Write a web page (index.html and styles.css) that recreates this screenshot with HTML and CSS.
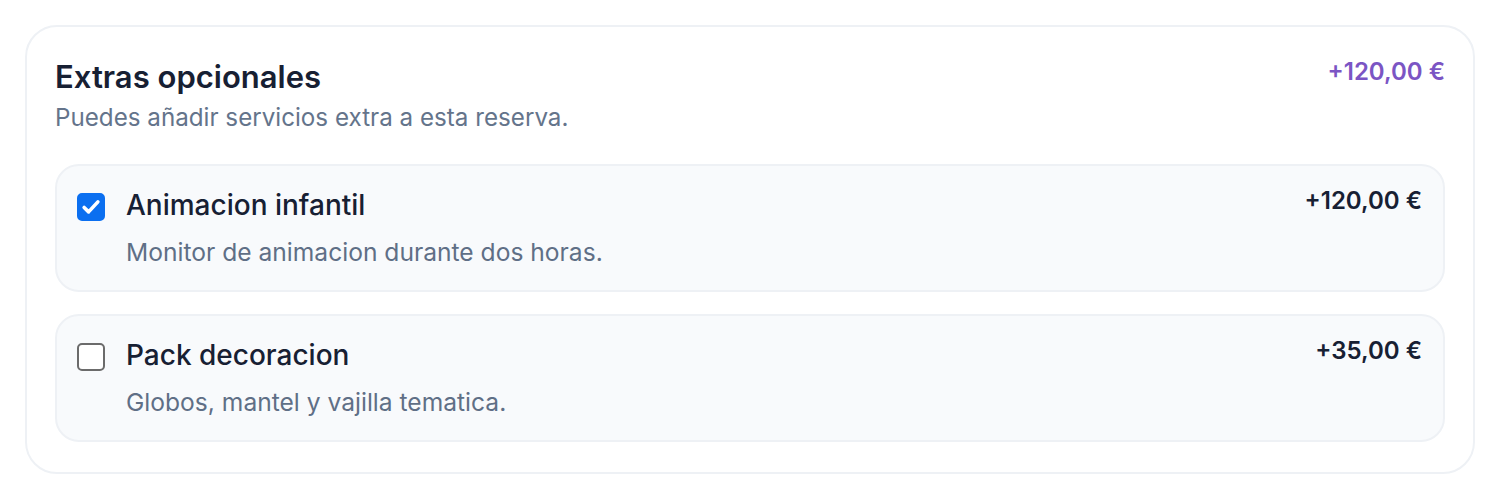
FILE: index.html
```html
<html>
<head>
    <link rel="stylesheet" href="styles.css">
</head>
<body>

<div class="panel">

    <div class="panel-head">
        <div>
            <h2>Extras opcionales</h2>
            <p class="hint">Puedes añadir servicios extra a esta reserva.</p>
        </div>
        <span class="total">+120,00 €</span>
    </div>

    <div class="extras">
        <label class="extra">
            <input type="checkbox" checked>
            <div class="extra-body">
                <div class="extra-top">
                    <span class="extra-name">Animacion infantil</span>
                    <span class="extra-price">+120,00 €</span>
                </div>
                <p class="extra-desc">Monitor de animacion durante dos horas.</p>
            </div>
        </label>

        <label class="extra">
            <input type="checkbox">
            <div class="extra-body">
                <div class="extra-top">
                    <span class="extra-name">Pack decoracion</span>
                    <span class="extra-price">+35,00 €</span>
                </div>
                <p class="extra-desc">Globos, mantel y vajilla tematica.</p>
            </div>
        </label>
    </div>

</div>

</body>
</html>
```

FILE: styles.css
```css
body{
    margin: 0;
    padding: 25px;
    background-color: #fff;
    font-family: Inter, "Noto Sans", sans-serif;
    color: #172033;
}
div.panel{
    border: 2px solid #eef1f5;
    border-radius: 32px;
    padding: 31px 28px 30px 28px;
}
.panel-head{
    display: flex;
    justify-content: space-between;
    align-items: flex-start;
}
h2{
    margin: 0;
    font-size: 31px;
    font-weight: 600;
    line-height: 38px;
    color: #172033;
}
p.hint{
    margin: 6px 0 0 0;
    font-size: 24.2px;
    line-height: 32px;
    color: #64748b;
}
.total{
    font-size: 24px;
    font-weight: 600;
    line-height: 28px;
    color: #7b55c4;
}
.extras{
    margin-top: 30px;
    display: flex;
    flex-direction: column;
    gap: 22px;
}
label.extra{
    display: flex;
    gap: 21px;
    padding: 21px 21px 22px 20px;
    background-color: #f8fafc;
    border: 2px solid #eef1f5;
    border-radius: 24px;
}
label.extra input{
    appearance: none;
    margin: 6px 0 0 0;
    width: 28px;
    height: 28px;
    flex-shrink: 0;
    border: 2px solid #6b6b6b;
    border-radius: 5px;
    background-color: #fff;
}
label.extra input:checked{
    border-color: #0b6ff0;
    background-color: #0b6ff0;
    background-image: url("data:image/svg+xml,%3Csvg xmlns='http://www.w3.org/2000/svg' viewBox='0 0 28 28'%3E%3Cpath d='M6 14.5l5.2 5.2L22 8' fill='none' stroke='%23fff' stroke-width='4.2' stroke-linecap='round' stroke-linejoin='round'/%3E%3C/svg%3E");
    background-size: 100% 100%;
}
.extra-body{
    flex: 1;
}
.extra-top{
    display: flex;
    justify-content: space-between;
    align-items: flex-start;
}
.extra-name{
    font-size: 28px;
    font-weight: 500;
    line-height: 36px;
}
.extra-price{
    font-size: 24px;
    font-weight: 600;
    line-height: 28px;
}
p.extra-desc{
    margin: 13px 0 0 0;
    font-size: 24.6px;
    line-height: 32px;
    color: #5f6f86;
}
```
